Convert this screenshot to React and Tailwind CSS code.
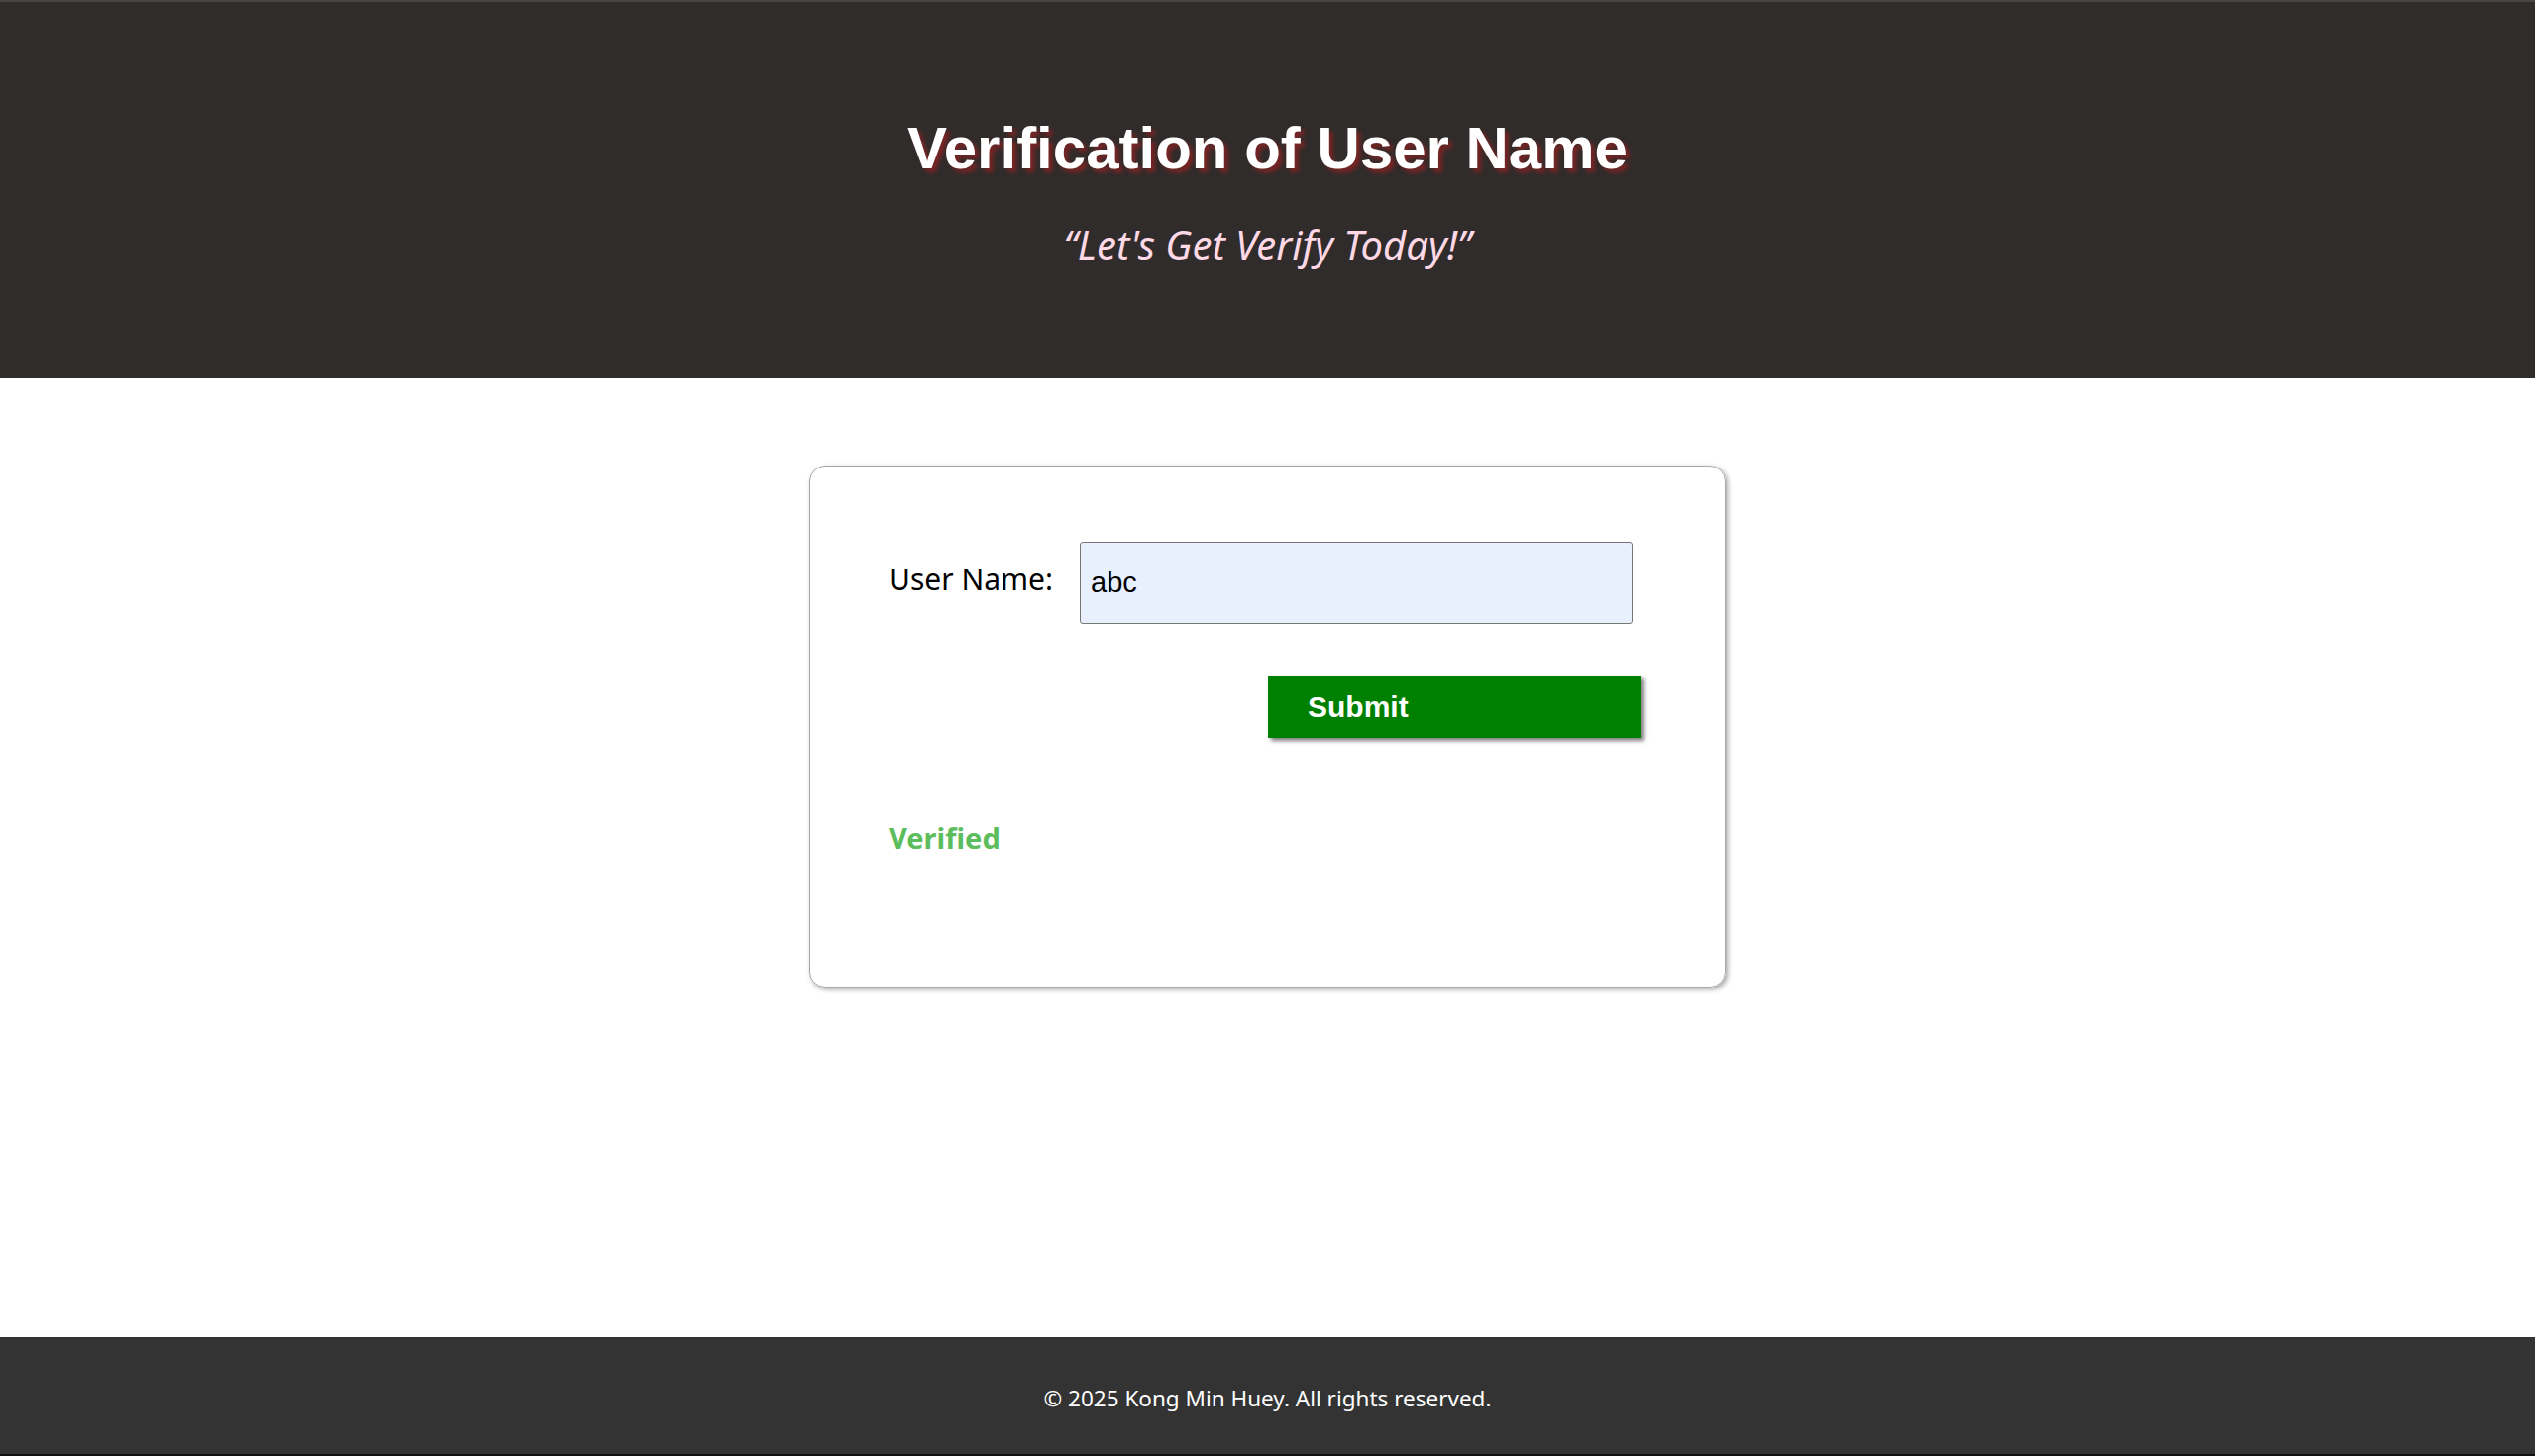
import { useState } from 'react';

const App = () => {
  const [name, setName] = useState('abc');
  const [status, setStatus] = useState('Verified');

  const handleSubmit = (e) => {
    e.preventDefault();
    setStatus(name.trim() ? 'Verified' : 'Not Verified');
  };

  return (
    <div className="min-h-screen flex flex-col bg-white">
      {/* Header */}
      <header className="h-[382px] bg-[#302c2b] border-t-2 border-[#474443] flex flex-col items-center">
        <h1 className="mt-[108px] text-[60px] leading-[80px] font-bold text-white font-['Liberation_Sans',Arial,sans-serif] [text-shadow:4px_4px_4px_#7a2424]">
          Verification of User Name
        </h1>
        <p className="mt-[31px] text-[40px] leading-[52px] italic text-[#ffd9e6] font-['Noto_Sans',sans-serif]">
          “Let's Get Verify Today!”
        </p>
      </header>

      {/* Main */}
      <main className="flex-1 flex justify-center pt-[88px]">
        <form
          onSubmit={handleSubmit}
          className="w-[925px] h-[527px] border border-[#a8a8a8] rounded-[16px] shadow-[2px_2px_5px_rgba(0,0,0,0.35)] pl-[79px] pt-[76px] flex flex-col"
        >
          <div className="flex items-center">
            <label className="text-[30px] leading-[40px] -mt-[8px] text-black font-['Noto_Sans',sans-serif]">User Name:</label>
            <input
              value={name}
              onChange={(e) => setName(e.target.value)}
              className="ml-[27px] w-[558px] h-[83px] bg-[#e8f0fe] border border-[#767676] rounded-[3px] pl-[10px] text-[29px] text-black font-['Liberation_Sans',Arial,sans-serif] outline-none"
            />
          </div>
          <div className="flex mt-[52px] pl-[383px]">
            <button
              type="submit"
              className="w-[377px] h-[63px] bg-[#008000] text-white text-[30px] font-bold text-left pl-[40px] font-['Liberation_Sans',Arial,sans-serif] shadow-[3px_3px_4px_rgba(0,0,0,0.5)]"
            >
              Submit
            </button>
          </div>
          <p className="mt-[79px] text-[29px] font-bold text-[#5cbd5c] font-['Noto_Sans',sans-serif]">{status}</p>
        </form>
      </main>

      {/* Footer */}
      <footer className="h-[120px] bg-[#333333] border-b-2 border-[#111] flex items-center justify-center pt-[5px]">
        <p className="text-[22.5px] text-white font-['Noto_Sans',sans-serif]">© 2025 Kong Min Huey. All rights reserved.</p>
      </footer>
    </div>
  );
};

export default App;
